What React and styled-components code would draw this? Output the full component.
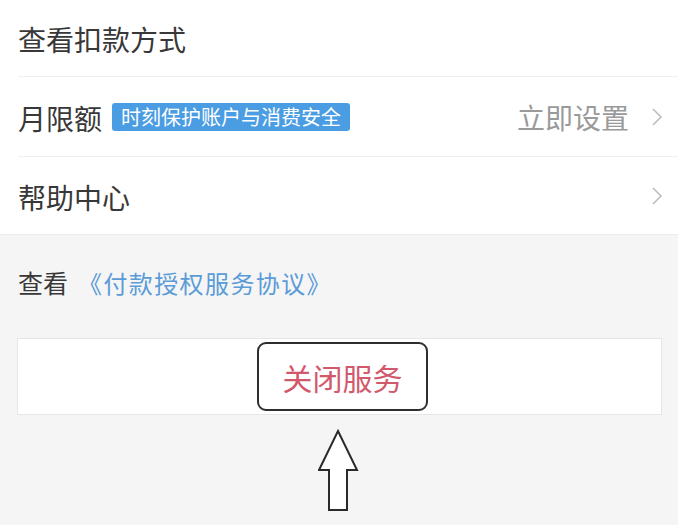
import React from "react";
import styled, { createGlobalStyle } from "styled-components";

const Global = createGlobalStyle`
  html, body { margin: 0; padding: 0; background: #f5f5f5; }
  body { font-family: "Noto Sans CJK SC", "Noto Sans", sans-serif; }
`;

const Page = styled.div`
  width: 678px;
  height: 525px;
  overflow: hidden;
  background: #f5f5f5;
`;

const List = styled.div`
  background: #fff;
  border-bottom: 1px solid #ececec;
`;

const Row = styled.div`
  padding-left: 18px;
`;

const RowBody = styled.div`
  display: flex;
  align-items: center;
  height: ${(p) => p.$h}px;
  padding-right: 15px;
  border-bottom: ${(p) => (p.$last ? "none" : "1px solid #efefef")};
  box-sizing: content-box;
`;

const Label = styled.span`
  font-size: 28px;
  color: #383838;
  line-height: 1;
  padding-top: 2px;
`;

const Tag = styled.span`
  margin-left: 10px;
  height: 28px;
  padding: 0 9px;
  display: inline-flex;
  align-items: center;
  background: #4a9de3;
  color: #fff;
  font-size: 20px;
  border-radius: 3px;
  line-height: 1;
`;

const Spacer = styled.div`
  flex: 1;
`;

const Extra = styled.span`
  font-size: 28px;
  color: #9a9a9a;
  line-height: 1;
  margin-right: 22px;
`;

const Chevron = () => (
  <svg width="12" height="20" viewBox="0 0 12 20">
    <path d="M2 2 L10 10 L2 18" fill="none" stroke="#bdbdbd" strokeWidth="1.6" />
  </svg>
);

const Agreement = styled.div`
  display: flex;
  align-items: center;
  height: 48px;
  margin-top: 23px;
  padding-left: 18px;
  gap: 10px;
`;

const AgreeLabel = styled.span`
  font-size: 25px;
  color: #383838;
`;

const AgreeLink = styled.span`
  font-size: 24px;
  letter-spacing: 1.4px;
  color: #5a9bd8;
`;

const Card = styled.div`
  margin: 32px 16px 0 17px;
  height: 75px;
  background: #fff;
  border: 1px solid #e6e6e6;
  display: flex;
  align-items: center;
  justify-content: center;
`;

const Outline = styled.div`
  margin-left: 6px;
  width: 167px;
  height: 65px;
  border: 2px solid #2e2e2e;
  border-radius: 9px;
  display: flex;
  align-items: center;
  justify-content: center;
  font-size: 30px;
  color: #d2586c;
`;

const ArrowWrap = styled.div`
  display: flex;
  justify-content: center;
  margin-top: 14px;
`;

const Arrow = () => (
  <svg width="42" height="84" viewBox="0 0 42 84">
    <path
      d="M20 2 L39 41 L29 41 L29 81 L11 81 L11 41 L1 41 Z"
      fill="#fff"
      stroke="#2a2a2a"
      strokeWidth="2"
      strokeLinejoin="miter"
    />
  </svg>
);

export default function App() {
  return (
    <Page>
      <Global />
      <List>
        <Row>
          <RowBody $h={76}>
            <Label>查看扣款方式</Label>
          </RowBody>
        </Row>
        <Row>
          <RowBody $h={79}>
            <Label>月限额</Label>
            <Tag>时刻保护账户与消费安全</Tag>
            <Spacer />
            <Extra>立即设置</Extra>
            <Chevron />
          </RowBody>
        </Row>
        <Row>
          <RowBody $h={77} $last>
            <Label>帮助中心</Label>
            <Spacer />
            <Chevron />
          </RowBody>
        </Row>
      </List>
      <Agreement>
        <AgreeLabel>查看</AgreeLabel>
        <AgreeLink>《付款授权服务协议》</AgreeLink>
      </Agreement>
      <Card>
        <Outline>关闭服务</Outline>
      </Card>
      <ArrowWrap>
        <Arrow />
      </ArrowWrap>
    </Page>
  );
}
